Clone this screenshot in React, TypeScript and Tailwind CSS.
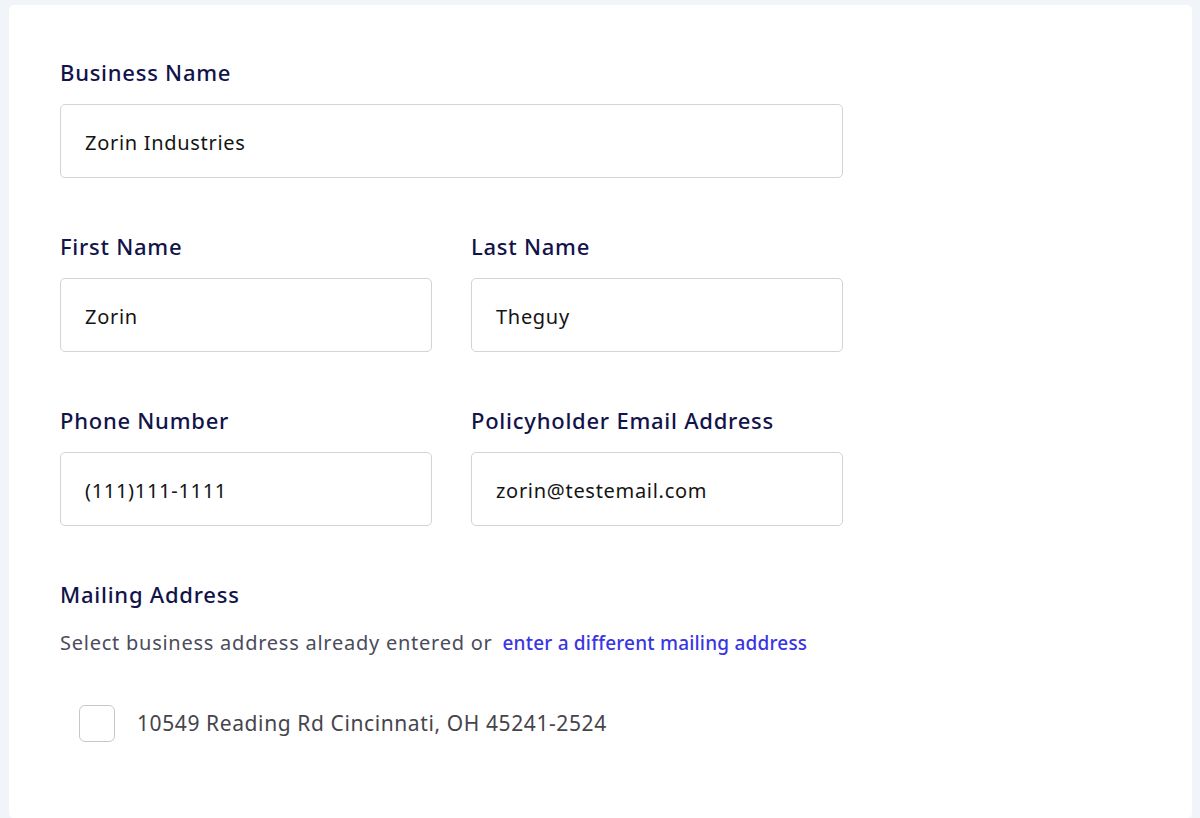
import React from 'react';

function Field({ label, value }: { label: string; value: string }) {
  return (
    <div className="flex flex-col">
      <label className="text-[22px] leading-[28px] font-medium tracking-[0.75px] text-[#12134a]">{label}</label>
      <div className="mt-[18px] h-[74px] flex items-center px-[24px] pt-[3px] border border-[#d3d3d8] rounded-[5px] bg-white">
        <span className="text-[20px] tracking-[0.7px] text-[#141414]">{value}</span>
      </div>
    </div>
  );
}

export default function App() {
  return (
    <div
      className="min-h-[818px] bg-[#f1f4f9] pl-[9px] pr-[8px] pt-[5px]"
      style={{ fontFamily: '"Noto Sans", sans-serif' }}
    >
      <div className="bg-white rounded-[5px] min-h-[813px] pl-[51px] pt-[53px]">
        <div className="w-[783px] flex flex-col">
          {/* Business */}
          <Field label="Business Name" value="Zorin Industries" />

          <div className="grid grid-cols-2 gap-x-[39px] mt-[54px]">
            <Field label="First Name" value="Zorin" />
            <Field label="Last Name" value="Theguy" />
          </div>

          <div className="grid grid-cols-2 gap-x-[39px] mt-[54px]">
            <Field label="Phone Number" value="(111)111-1111" />
            <Field label="Policyholder Email Address" value="zorin@testemail.com" />
          </div>

          {/* Mailing address */}
          <div className="mt-[54px] flex flex-col">
            <h3 className="text-[22px] leading-[28px] font-medium tracking-[0.75px] text-[#12134a]">Mailing Address</h3>
            <p className="mt-[20px] text-[20px] tracking-[0.75px] text-[#4b4b5c]">
              Select business address already entered or{' '}
              <a href="#" className="ml-[4px] text-[19px] tracking-[0.2px] font-medium text-[#3a35e3]">
                enter a different mailing address
              </a>
            </p>
            <label className="mt-[47px] ml-[19px] flex items-center gap-[22px]">
              <span className="w-[36px] h-[37px] border border-[#c8c8cc] rounded-[6px] bg-white" />
              <span className="text-[21px] tracking-[0.6px] text-[#45454d]">10549 Reading Rd Cincinnati, OH 45241-2524</span>
            </label>
          </div>
        </div>
      </div>
    </div>
  );
}
